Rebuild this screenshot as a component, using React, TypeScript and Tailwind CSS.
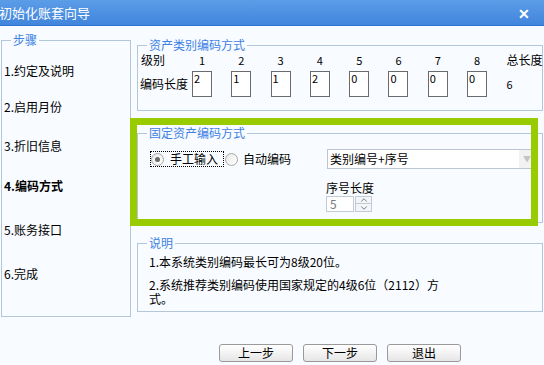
import { ChevronDown, ChevronUp } from 'lucide-react'

const steps = [
  { label: '1.约定及说明', mt: 'mt-[17px]' },
  { label: '2.启用月份', mt: 'mt-[22px]' },
  { label: '3.折旧信息', mt: 'mt-[25px]' },
  { label: '4.编码方式', mt: 'mt-[26px]', active: true },
  { label: '5.账务接口', mt: 'mt-[30px]' },
  { label: '6.完成', mt: 'mt-[30px]' },
]

const levels = ['2', '1', '1', '2', '0', '0', '0', '0']

const Legend = ({ children }: { children: string }) => (
  <legend className="ml-[9px] px-[2px] text-[12px] leading-[14px] text-[#3d82e4]">{children}</legend>
)

const Button = ({ children }: { children: string }) => (
  <button className="h-[18px] w-[74px] rounded-[3px] border border-[#9a9a9a] bg-gradient-to-b from-white to-[#e6e6e6] text-[12px] leading-[16px] text-black">
    {children}
  </button>
)

export default function App() {
  return (
    <div className="h-[365px] w-[544px] overflow-hidden bg-[#f8fbff] text-black" style={{ fontFamily: '"Noto Sans CJK SC", "Noto Sans", sans-serif' }}>
      {/* Title bar */}
      <div className="flex h-[26px] items-center justify-between border-b border-[#2f72cf] bg-gradient-to-b from-[#5c9de8] to-[#4085dc] pr-[14px]">
        <span className="-ml-[1px] text-[13px] leading-[14px] text-white">初始化账套向导</span>
        <span className="text-[14px] font-bold leading-[14px] text-white">✕</span>
      </div>

      <div className="flex">
        {/* Steps */}
        <fieldset className="ml-[1px] mt-[7px] h-[284px] w-[130px] border border-[#b3c7d8]">
          <Legend>步骤</Legend>
          {steps.map((s) => (
            <div key={s.label} className={`${s.mt} pl-[2px] text-[12px] leading-[14px] ${s.active ? 'font-bold' : ''}`}>
              {s.label}
            </div>
          ))}
        </fieldset>

        {/* Right column */}
        <div className="ml-[6px] flex w-[406px] flex-col">
          <fieldset className="mt-[12px] h-[73px] border border-[#b3c7d8]">
            <Legend>资产类别编码方式</Legend>
            <div className="mt-[1px] flex pl-[3px] text-[12px] leading-[14px]">
              <div className="w-[51px]">级别</div>
              {levels.map((_, i) => (
                <div key={i} className="w-[39.3px]">
                  <div className="w-[20px] text-center text-[11px]">{i + 1}</div>
                </div>
              ))}
              <div className="whitespace-nowrap">总长度</div>
            </div>
            <div className="mt-[4px] flex items-center pl-[2px] text-[12px] leading-[14px]">
              <div className="w-[52px]">编码长度</div>
              {levels.map((v, i) => (
                <div key={i} className="w-[39.3px]">
                  <div className="h-[26px] w-[20px] border border-[#6b6b6b] bg-white pl-[1px] text-[11px] leading-[13px]">{v}</div>
                </div>
              ))}
              <div className="text-[11px]">6</div>
            </div>
          </fieldset>

          {/* Fixed asset coding */}
          <div className="relative">
            <fieldset className="mt-[15px] h-[97px] border border-[#b3c7d8]">
              <Legend>固定资产编码方式</Legend>
              <div className="mt-[9px] flex items-center text-[12px] leading-[14px]">
                <div className="ml-[12px] flex h-[16px] items-center border border-dotted border-black pr-[5px]">
                  <span className="flex h-[13px] w-[13px] items-center justify-center rounded-full border border-[#a8a8a8] bg-gradient-to-br from-[#e8e8e8] to-white">
                    <span className="h-[5px] w-[5px] rounded-full bg-[#6a6a6a]" />
                  </span>
                  <span className="ml-[6px]">手工输入</span>
                </div>
                <span className="ml-[1px] h-[13px] w-[13px] rounded-full border border-[#a8a8a8] bg-gradient-to-br from-[#e8e8e8] to-white" />
                <span className="ml-[5px]">自动编码</span>
                <div className="ml-[36px] flex h-[20px] w-[209px] items-center justify-between border border-[#bcc6d2] bg-white pl-[2px]">
                  <span>类别编号+序号</span>
                  <span className="flex h-full w-[16px] items-center justify-center bg-[#f2f2f2] text-[8px] text-[#c4c4c4]">▼</span>
                </div>
              </div>
              <div className="ml-[188px] mt-[12px] text-[12px] leading-[14px]">序号长度</div>
              <div className="ml-[188px] mt-[1px] flex">
                <div className="h-[16px] w-[28px] border border-[#c3cad3] bg-white pl-[3px] text-[12px] leading-[14px] text-[#777]">5</div>
                <div className="ml-[1px] flex flex-col">
                  <span className="flex h-[8px] w-[17px] items-center justify-center border border-[#c3cad3] bg-[#f3f5f8]">
                    <ChevronUp size={10} strokeWidth={2} className="text-[#666]" />
                  </span>
                  <span className="flex h-[8px] w-[17px] items-center justify-center border border-t-0 border-[#c3cad3] bg-[#f3f5f8]">
                    <ChevronDown size={10} strokeWidth={2} className="text-[#666]" />
                  </span>
                </div>
              </div>
            </fieldset>
            {/* highlight frame */}
            <div className="pointer-events-none absolute left-[-7px] top-[7px] h-[108px] w-[408px] border-[7px] border-[#99cc00]" />
          </div>

          {/* Notes */}
          <fieldset className="mt-[13px] h-[76px] border border-[#b3c7d8]">
            <Legend>说明</Legend>
            <div className="pl-[11px] text-[12px]">
              <div className="mt-[6px] whitespace-nowrap leading-[11px]">1.本系统类别编码最长可为8级20位。</div>
              <div className="mt-[11px] whitespace-nowrap leading-[14px]">2.系统推荐类别编码使用国家规定的4级6位（2112）方</div>
              <div className="whitespace-nowrap leading-[14px]">式。</div>
            </div>
          </fieldset>

          <div className="mt-[32px] flex justify-center gap-[10px]">
            <Button>上一步</Button>
            <Button>下一步</Button>
            <Button>退出</Button>
          </div>
        </div>
      </div>
    </div>
  )
}
